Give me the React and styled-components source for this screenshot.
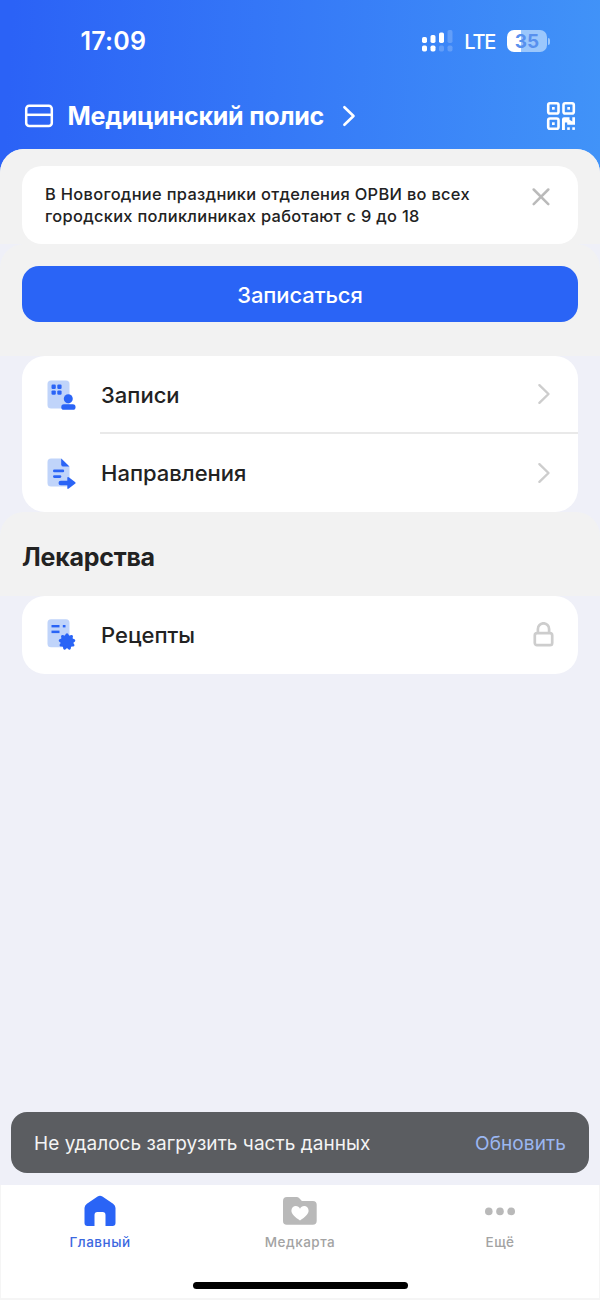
import React from 'react';

import styled, { createGlobalStyle } from 'styled-components';

const colors = {
  primary: '#2a64f6',
  pale: '#c0d4fa',
  panel: '#f2f2f2',
  page: '#eff0f8',
  text: '#222222',
  muted: '#b9b9b9',
};

const GlobalStyle = createGlobalStyle`
  * {
    box-sizing: border-box;
  }

  body {
    margin: 0;
    font-family: Inter, 'Liberation Sans', sans-serif;
    color: ${colors.text};
  }

  svg {
    display: block;
    flex-shrink: 0;
  }

  button {
    border: none;
    background: none;
    padding: 0;
    font-family: inherit;
  }
`;

const Screen = styled.div`
  display: flex;
  flex-direction: column;
  width: 600px;
  height: 1300px;
  overflow: hidden;
  background: linear-gradient(93deg, #2b62f6 2%, #4193f8 100%) 0 0 / 100% 180px no-repeat
    ${colors.page};
`;

const StatusBar = styled.div`
  display: flex;
  justify-content: space-between;
  align-items: center;
  height: 82px;
  padding: 0 50px 0 80.5px;
  color: #fff;
`;

const Time = styled.span`
  font-size: 25px;
  font-weight: 560;
  letter-spacing: 0.2px;
`;

const StatusIcons = styled.div`
  display: flex;
  align-items: center;
`;

const Network = styled.span`
  margin: 2px 12px 0 11px;
  font-size: 20px;
  font-weight: 500;
  letter-spacing: -1.3px;
`;

const Battery = styled.div`
  display: flex;
  justify-content: center;
  align-items: center;
  width: 40px;
  height: 22px;
  border-radius: 7px;
  background: linear-gradient(90deg, #fff 35%, #9bc7fc 35%);
  color: #5790ee;
  font-size: 19px;
  font-weight: 700;
`;

const BatteryTip = styled.div`
  width: 2px;
  height: 7px;
  margin-left: 1px;
  border-radius: 0 3px 3px 0;
  background: #9bc7fc;
`;

const PolicyBar = styled.header`
  display: flex;
  align-items: center;
  height: 67px;
  padding: 0 24px;
  color: #fff;
`;

const PolicyTitle = styled.h1`
  margin: 1px 18px 0 13.5px;
  font-size: 25px;
  font-weight: 680;
  line-height: 30px;
  letter-spacing: -0.22px;
  white-space: nowrap;
`;

const QrButton = styled.button`
  margin-left: auto;
  color: #fff;
`;

const Sheet = styled.main`
  flex: 1;
  border-radius: 24px 24px 0 0;
  background: ${colors.page};
`;

const Panel = styled.section`
  height: ${(props) => props.$height}px;
  padding: ${(props) => props.$padding};
  border-radius: 24px 24px 0 0;
  background: ${colors.panel};
`;

const Notice = styled.div`
  display: flex;
  justify-content: space-between;
  height: 78px;
  padding: 17px 28px 0 23px;
  border-radius: 20px;
  background: #fff;
`;

const NoticeText = styled.p`
  margin: 0;
  font-size: 16.4px;
  font-weight: 490;
  line-height: 22px;
  letter-spacing: 0.32px;
  white-space: nowrap;
`;

const CloseButton = styled.button`
  height: 18px;
  margin-top: 5px;
`;

const PrimaryButton = styled.button`
  width: 100%;
  height: 56px;
  padding-top: 1px;
  border-radius: 17px;
  background: ${colors.primary};
  color: #fff;
  font-size: 22px;
  font-weight: 450;
  letter-spacing: -0.1px;
`;

const Card = styled.div`
  margin: 0 22px;
  border-radius: 23px;
  background: #fff;
`;

const RowBox = styled.div`
  display: flex;
  align-items: center;
  height: 78px;
  padding-left: 25px;
`;

const RowBody = styled.div`
  display: flex;
  flex: 1;
  justify-content: space-between;
  align-items: center;
  height: 100%;
  margin-left: 23px;
  padding-right: ${(props) => props.$inset}px;
  border-bottom: ${(props) => (props.$divided ? '2px solid #e9e9e9' : 'none')};
`;

const RowLabel = styled.span`
  padding: ${(props) => (props.$divided ? '2px' : '0')} 0 0 1px;
  font-size: 22px;
  font-weight: 460;
`;

const SectionTitle = styled.h2`
  margin: 0;
  font-size: 25px;
  font-weight: 680;
  line-height: 30px;
  letter-spacing: -0.25px;
`;

const Snackbar = styled.div`
  display: flex;
  justify-content: space-between;
  align-items: center;
  height: 61px;
  margin: 0 11px 12px;
  padding: 1px 23px 0;
  border-radius: 16px;
  background: #5b5d61;
  color: #f4f4f4;
  font-size: 19px;
  letter-spacing: 0.04px;
`;

const SnackbarAction = styled.button`
  color: #9bb7f1;
  font-size: 19px;
  letter-spacing: 0.1px;
`;

const TabBar = styled.nav`
  display: flex;
  flex-direction: column;
  align-items: center;
  height: 115px;
  border: solid #f5f5f5;
  border-width: 0 1px 2px;
  background: #fff;
`;

const Tabs = styled.div`
  display: flex;
  justify-content: center;
  width: 100%;
`;

const Tab = styled.div`
  display: flex;
  flex-direction: column;
  align-items: center;
  gap: 6px;
  width: 200px;
  flex-shrink: 0;
  padding-top: 8px;
  color: ${(props) => (props.$active ? colors.primary : colors.muted)};
`;

const TabLabel = styled.span`
  color: ${(props) => (props.$active ? '#3c68df' : '#a3a3a3')};
  font-size: 13.5px;
  font-weight: ${(props) => (props.$active ? 500 : 450)};
  line-height: 18px;
  letter-spacing: 0.5px;
`;

const HomeIndicator = styled.div`
  width: 215px;
  height: 7px;
  margin-top: 31px;
  border-radius: 4px;
  background: #000;
`;

const SignalIcon = () => (
  <svg width="31" height="22" fill="#fff">
    <rect x="0" y="7" width="5" height="6" rx="1.7" />
    <rect x="8.5" y="5" width="5" height="8" rx="1.7" />
    <rect x="17" y="2.5" width="5" height="10.5" rx="1.7" />
    <rect x="25.5" y="0" width="5" height="13" rx="1.7" opacity=".2" />
    <rect x="0" y="15.5" width="5" height="6" rx="1.7" />
    <rect x="8.5" y="15.5" width="5" height="6" rx="1.7" />
    <rect x="17" y="15.5" width="5" height="6" rx="1.7" opacity=".2" />
    <rect x="25.5" y="15.5" width="5" height="6" rx="1.7" opacity=".2" />
  </svg>
);

const CardIcon = () => (
  <svg width="30" height="24" fill="none" stroke="#fff" strokeWidth="2.5">
    <rect x="2.2" y="1.7" width="25.6" height="20.2" rx="3" />
    <path d="M2 10.8h26" />
  </svg>
);

const ChevronIcon = ({ color, width = 2.6 }) => (
  <svg
    width="14"
    height="22"
    fill="none"
    stroke={color}
    strokeWidth={width}
    strokeLinecap="round"
    strokeLinejoin="round"
  >
    <path d="M2.4 2.2 11.5 11 2.4 19.8" />
  </svg>
);

const QrIcon = () => (
  <svg width="30" height="30" fill="none" stroke="#fff" strokeWidth="2.6">
    <rect x="2.2" y="2.2" width="10.3" height="10.3" rx="1.8" />
    <rect x="17.5" y="2.2" width="10.3" height="10.3" rx="1.8" />
    <rect x="2.2" y="17.5" width="10.3" height="10.3" rx="1.8" />
    <g fill="#fff" stroke="none">
      <rect x="6" y="6" width="2.7" height="2.7" />
      <rect x="21.3" y="6" width="2.7" height="2.7" />
      <rect x="6" y="21.3" width="2.7" height="2.7" />
      <path d="M16 18.2a2 2 0 0 1 2-2h5.500v2.600l2.800 1.700v-4.300H29v7.600h-7.800v-2.300h-2.300v7.500H16z" />
      <rect x="21.2" y="26.3" width="2.6" height="2.6" />
      <rect x="26.3" y="26.3" width="2.6" height="2.6" />
    </g>
  </svg>
);

const CloseIcon = () => (
  <svg width="18" height="18" stroke="#bababa" strokeWidth="2.5" strokeLinecap="round">
    <path d="M1.7 1.5l14.6 14.6M16.3 1.5L1.7 16.1" />
  </svg>
);

const LockIcon = () => (
  <svg width="21" height="26" fill="none" stroke="#cdcdcd" strokeWidth="2.7">
    <rect x="1.8" y="11.2" width="17.4" height="12" rx="2.2" />
    <path d="M4.9 11V6.900a5.600 5.600 0 0 1 11.200 0V11" />
  </svg>
);

const AppointmentsIcon = () => (
  <svg width="30" height="32" fill={colors.primary}>
    <rect x="0.5" y="1.5" width="22" height="28" rx="3.5" fill={colors.pale} />
    <rect x="4.5" y="5.6" width="4.3" height="4.3" rx="1.2" />
    <rect x="10.3" y="5.6" width="4.3" height="4.3" rx="1.2" />
    <rect x="4.5" y="11.4" width="4.3" height="4.3" rx="1.2" />
    <rect x="10.3" y="11.4" width="4.3" height="4.3" rx="1.2" />
    <circle cx="21.3" cy="19.8" r="4.5" />
    <rect x="14.3" y="25.2" width="14.2" height="5.6" rx="2.6" />
  </svg>
);

const ReferralsIcon = () => (
  <svg width="30" height="32" fill={colors.primary}>
    <path
      d="M4 1.500h10.200l8.300 8v16.500a3.500 3.500 0 0 1-3.500 3.500H4A3.500 3.500 0 0 1 .5 26V5A3.500 3.500 0 0 1 4 1.500z"
      fill={colors.pale}
    />
    <path d="M14.200 1.500v5.900q0 2.200 2.200 2.200h6z" />
    <rect x="6" y="12.6" width="11.2" height="2.6" rx="1.3" />
    <rect x="6" y="18.3" width="8.3" height="2.6" rx="1.3" />
    <path d="M13.800 23.700h6.500v-2.600q0-1.900 1.500-.8l6.200 4.700q1.200.9 0 1.800l-6.200 4.700q-1.500 1.100-1.500-.8v-2.400h-6.500a2.300 2.300 0 0 1 0-4.600z" />
  </svg>
);

const RecipesIcon = () => (
  <svg width="30" height="32" fill={colors.primary}>
    <rect x="0.5" y="0.2" width="22" height="28" rx="3.5" fill={colors.pale} />
    <rect x="4.5" y="6" width="8" height="2.4" />
    <rect x="15.8" y="6" width="2.7" height="2.4" />
    <rect x="4.5" y="11.6" width="8" height="2.5" />
    <circle cx="20" cy="22.7" r="6.3" />
    {Array.from({ length: 9 }, (v, k) => (
      <path
        key={k}
        d="M17.400 17.500l1.500-2.700q1.100-1.100 2.200 0l1.500 2.700z"
        transform={`rotate(${k * 40} 20 22.7)`}
      />
    ))}
  </svg>
);

const HomeIcon = () => (
  <svg width="32" height="34" viewBox="0 0 32 34" fill="currentColor">
    <path d="M13.600 3.500q2.400-1.600 4.800 0l10.700 7.200q2.400 1.600 2.400 4.400v15q0 3-3 3h-7V22q0-2.900-2.900-2.900h-5.200q-2.900 0-2.900 2.900v11.100h-7q-3 0-3-3v-15q0-2.800 2.400-4.400z" />
  </svg>
);

const FolderHeartIcon = () => (
  <svg width="34" height="34" viewBox="0 0 34 34" fill="currentColor">
    <path d="M4 4h9.500q1.700 0 2.800 1.200l2.600 2.800h11q3.800 0 3.800 3.800v16q0 4-4 4H3.800q-3.800 0-3.800-3.800V8q0-4 4-4z" />
    <path
      d="M17 27.500c-4.500-3.200-8.600-6.300-8.600-9.800 0-2.800 2-4.600 4.400-4.600 1.900 0 3.400 1 4.200 2.600.8-1.600 2.300-2.600 4.200-2.600 2.400 0 4.400 1.800 4.400 4.600 0 3.500-4.100 6.600-8.600 9.800z"
      fill="#fff"
    />
  </svg>
);

const MoreIcon = () => (
  <svg width="30" height="34" fill="currentColor">
    <circle cx="3.8" cy="18.4" r="3.8" />
    <circle cx="15" cy="18.4" r="3.8" />
    <circle cx="26.2" cy="18.4" r="3.8" />
  </svg>
);

function Row({ icon, label, divided, locked }) {
  return (
    <RowBox>
      {icon}
      <RowBody $divided={divided} $inset={locked ? 24.5 : 27}>
        <RowLabel $divided={divided}>{label}</RowLabel>
        {locked ? <LockIcon /> : <ChevronIcon color="#cdcdcd" width={2.4} />}
      </RowBody>
    </RowBox>
  );
}

const tabs = [
  { label: 'Главный', icon: <HomeIcon />, active: true },
  { label: 'Медкарта', icon: <FolderHeartIcon /> },
  { label: 'Ещё', icon: <MoreIcon /> },
];

function App() {
  return (
    <Screen>
      <GlobalStyle />
      <StatusBar>
        <Time>17:09</Time>
        <StatusIcons>
          <SignalIcon />
          <Network>LTE</Network>
          <Battery>35</Battery>
          <BatteryTip />
        </StatusIcons>
      </StatusBar>
      <PolicyBar>
        <CardIcon />
        <PolicyTitle>Медицинский полис</PolicyTitle>
        <ChevronIcon color="#fff" />
        <QrButton aria-label="QR">
          <QrIcon />
        </QrButton>
      </PolicyBar>

      <Sheet>
        <Panel $height={95} $padding="17px 22px 0">
          <Notice>
            <NoticeText>
              В Новогодние праздники отделения ОРВИ во всех
              <br />
              городских поликлиниках работают с 9 до 18
            </NoticeText>
            <CloseButton>
              <CloseIcon />
            </CloseButton>
          </Notice>
        </Panel>
        <Panel $height={112} $padding="22px 22px 0">
          <PrimaryButton>Записаться</PrimaryButton>
        </Panel>
        <Card>
          <Row icon={<AppointmentsIcon />} label="Записи" divided />
          <Row icon={<ReferralsIcon />} label="Направления" />
        </Card>
        <Panel $height={84} $padding="30px 22px 0">
          <SectionTitle>Лекарства</SectionTitle>
        </Panel>
        <Card>
          <Row icon={<RecipesIcon />} label="Рецепты" locked />
        </Card>
      </Sheet>

      <Snackbar>
        <span>Не удалось загрузить часть данных</span>
        <SnackbarAction>Обновить</SnackbarAction>
      </Snackbar>
      <TabBar>
        <Tabs>
          {tabs.map((tab) => (
            <Tab key={tab.label} $active={tab.active}>
              {tab.icon}
              <TabLabel $active={tab.active}>{tab.label}</TabLabel>
            </Tab>
          ))}
        </Tabs>
        <HomeIndicator />
      </TabBar>
    </Screen>
  );
}

export default App;
